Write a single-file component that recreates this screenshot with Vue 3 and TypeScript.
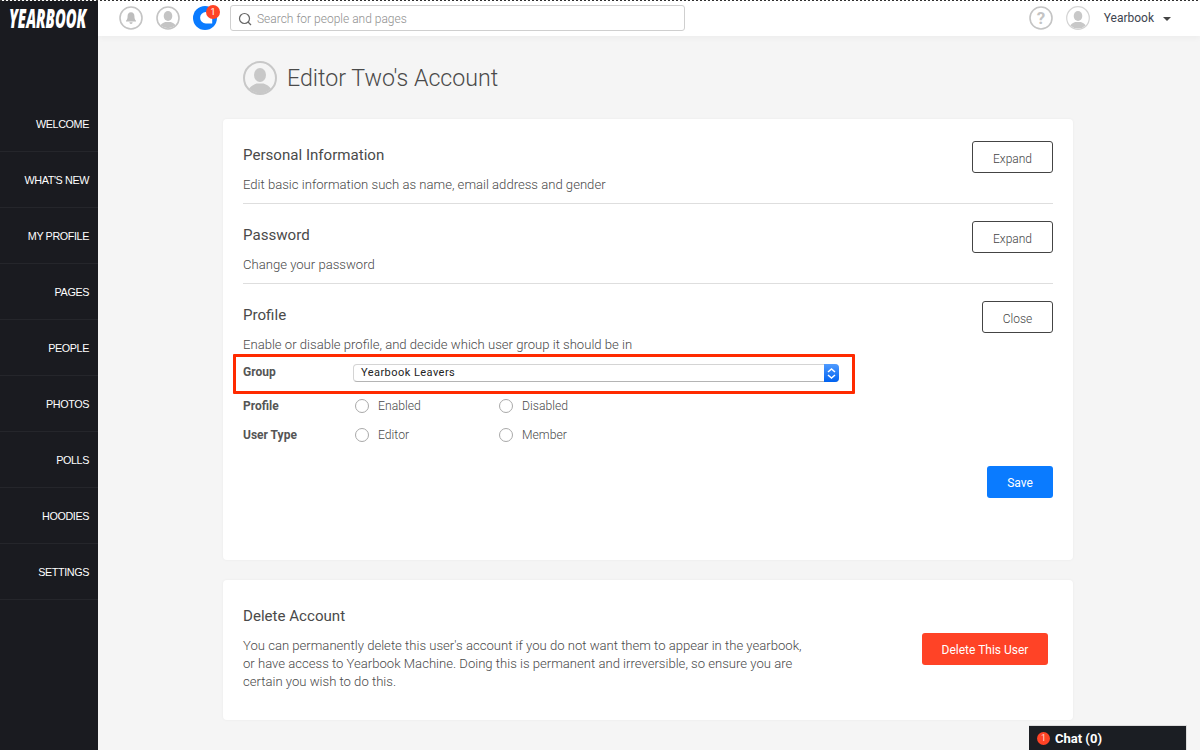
<script setup lang="ts">
const navItems: string[] = ['WELCOME', "WHAT'S NEW", 'MY PROFILE', 'PAGES', 'PEOPLE', 'PHOTOS', 'POLLS', 'HOODIES', 'SETTINGS']
</script>

<template>
  <div class="app">
    <div class="dots"></div>
    <aside class="sidebar">
      <div class="logo"><span>YEARBOOK</span></div>
      <nav class="nav">
        <a v-for="item in navItems" :key="item" class="nav-item">{{ item }}</a>
      </nav>
    </aside>
    <div class="main">
      <header class="topbar">
        <div class="top-left">
          <svg class="ic" width="24" height="24" viewBox="0 0 24 24">
            <circle cx="12" cy="12" r="11" fill="#fff" stroke="#c4c4c4" stroke-width="1.6" />
            <path d="M12 6.2c-2.4 0-3.4 1.8-3.4 3.8 0 2.6-.6 3.800-1.600 4.800v.7h10v-.7c-1-1-1.600-2.200-1.600-4.800 0-2-1-3.800-3.400-3.800z" fill="#bdbdbd" />
            <path d="M10.4 16.300h3.200a1.600 1.600 0 0 1-3.200 0z" fill="#bdbdbd" />
          </svg>
          <svg class="ic" width="24" height="24" viewBox="0 0 24 24">
            <defs><clipPath id="c1"><circle cx="12" cy="12" r="10.2" /></clipPath></defs>
            <circle cx="12" cy="12" r="11" fill="#fff" stroke="#c4c4c4" stroke-width="1.6" />
            <g clip-path="url(#c1)" fill="#c4c4c4">
              <ellipse cx="12" cy="10" rx="4.300" ry="5" />
              <path d="M3 24c0-5 4-7.500 6.500-8h5c2.500.5 6.500 3 6.500 8z" />
            </g>
          </svg>
          <div class="chat-ic">
            <svg width="24" height="24" viewBox="0 0 24 24">
              <circle cx="12" cy="12" r="12" fill="#0a7bff" />
              <path d="M12.800 6a5.700 5.700 0 1 0 0 11.400h6.400v-5.700a5.700 5.700 0 0 0-6.400-5.700z" fill="#fff" />
            </svg>
            <span class="bubble">1</span>
          </div>
          <div class="search">
            <svg width="14" height="14" viewBox="0 0 14 14" fill="none" stroke="#666" stroke-width="1.200">
              <circle cx="6.500" cy="6.500" r="5" />
              <path d="M10 10l3 3" />
            </svg>
            <span>Search for people and pages</span>
          </div>
        </div>
        <div class="top-right">
          <svg class="ic" width="24" height="24" viewBox="0 0 24 24">
            <circle cx="12" cy="12" r="11" fill="#fff" stroke="#c4c4c4" stroke-width="1.600" />
            <text x="12" y="18" text-anchor="middle" class="q">?</text>
          </svg>
          <svg class="ic user" width="24" height="24" viewBox="0 0 24 24">
            <defs><clipPath id="c2"><circle cx="12" cy="12" r="10.600" /></clipPath></defs>
            <circle cx="12" cy="12" r="11.300" fill="#fff" stroke="#d4d4d4" stroke-width="1.200" />
            <g clip-path="url(#c2)" fill="#c8c8c8">
              <ellipse cx="12" cy="10" rx="4.300" ry="5" />
              <path d="M3 24c0-5 4-7.500 6.500-8h5c2.500.5 6.500 3 6.500 8z" />
            </g>
          </svg>
          <span class="uname">Yearbook</span>
          <span class="caret"></span>
        </div>
      </header>

      <main class="content">
        <div class="page-title">
          <svg width="34" height="34" viewBox="0 0 34 34">
            <defs><clipPath id="c3"><circle cx="17" cy="17" r="15.200" /></clipPath></defs>
            <circle cx="17" cy="17" r="16" fill="#f5f5f5" stroke="#c8c8c8" stroke-width="2" />
            <g clip-path="url(#c3)" fill="#c8c8c8">
              <ellipse cx="17" cy="14" rx="6" ry="7" />
              <path d="M4 34c0-7 6-10.500 9.500-11.500h7c3.500 1 9.500 4.500 9.500 11.500z" />
            </g>
          </svg>
          <h1>Editor Two's Account</h1>
        </div>

        <section class="card account">
          <div class="section">
            <div class="section-text">
              <h2>Personal Information</h2>
              <p>Edit basic information such as name, email address and gender</p>
            </div>
            <button class="btn-outline expand">Expand</button>
          </div>
          <div class="section">
            <div class="section-text">
              <h2>Password</h2>
              <p>Change your password</p>
            </div>
            <button class="btn-outline expand">Expand</button>
          </div>
          <div class="section open">
            <div class="section-text">
              <h2>Profile</h2>
              <p>Enable or disable profile, and decide which user group it should be in</p>
            </div>
            <button class="btn-outline close">Close</button>
          </div>

          <div class="form">
            <div class="form-row group-row">
              <label>Group</label>
              <div class="select">
                <span>Yearbook Leavers</span>
                <span class="select-arrow">
                  <svg width="9" height="13" viewBox="0 0 9 13" fill="none" stroke="#fff" stroke-width="1.500">
                    <path d="M1 5l3.500-3L8 5" />
                    <path d="M1 8l3.500 3L8 8" />
                  </svg>
                </span>
              </div>
              <div class="highlight"></div>
            </div>
            <div class="form-row radios">
              <label>Profile</label>
              <span class="radio"><i></i>Enabled</span>
              <span class="radio"><i></i>Disabled</span>
            </div>
            <div class="form-row radios">
              <label>User Type</label>
              <span class="radio"><i></i>Editor</span>
              <span class="radio"><i></i>Member</span>
            </div>
          </div>
          <div class="save-row">
            <button class="btn-save">Save</button>
          </div>
        </section>

        <section class="card delete">
          <div class="delete-text">
            <h2>Delete Account</h2>
            <p>You can permanently delete this user's account if you do not want them to appear in the yearbook, or have access to Yearbook Machine. Doing this is permanent and irreversible, so ensure you are certain you wish to do this.</p>
          </div>
          <button class="btn-delete">Delete This User</button>
        </section>
      </main>
    </div>

    <div class="chat">
      <span class="chat-badge">1</span>
      <span>Chat (0)</span>
    </div>
  </div>
</template>

<style>
html, body { margin: 0; padding: 0; background: #f5f5f5; }
</style>

<style scoped>
.app {
  position: relative;
  display: flex;
  width: 1200px;
  height: 750px;
  overflow: hidden;
  background: #f5f5f5;
  font-family: Roboto, "Liberation Sans", sans-serif;
  color: #4a4a4a;
}
.dots {
  position: absolute;
  top: 0;
  left: 0;
  right: 0;
  height: 1px;
  z-index: 5;
  background: repeating-linear-gradient(90deg, #333 0 2px, #fff 2px 4px);
}
.sidebar {
  width: 98px;
  flex: none;
  background: #1a1b20;
  color: #fff;
}
.logo {
  height: 96px;
  box-sizing: border-box;
  padding: 3px 0 0 9px;
  font-family: "Open Sans", sans-serif;
  font-size: 26px;
  line-height: 30px;
  font-weight: 800;
  font-style: italic;
  color: #fff;
}
.logo span {
  display: inline-block;
  transform: scaleX(0.565);
  transform-origin: 0 50%;
  white-space: nowrap;
}
.nav { display: flex; flex-direction: column; }
.nav-item {
  height: 56px;
  box-sizing: border-box;
  padding: 1px 9px 0 0;
  display: flex;
  align-items: center;
  justify-content: flex-end;
  font-family: "Liberation Sans", sans-serif;
  font-size: 10.800px;
  letter-spacing: -0.4px;
  color: #fff;
  border-bottom: 1px solid #25262b;
}
.main { flex: 1; min-width: 0; display: flex; flex-direction: column; }
.topbar {
  height: 36px;
  flex: none;
  background: #fff;
  display: flex;
  align-items: center;
  justify-content: space-between;
  padding: 0 29px 0 21px;
  box-shadow: 0 2px 6px rgba(0, 0, 0, 0.04);
}
.top-left { display: flex; align-items: center; gap: 13px; }
.top-right { display: flex; align-items: center; }
.ic { display: block; }
.chat-ic { position: relative; width: 24px; height: 24px; }
.chat-ic svg { display: block; }
.bubble {
  position: absolute;
  top: -1px;
  right: -3px;
  width: 14px;
  height: 14px;
  border-radius: 50%;
  background: #ff4326;
  color: #fff;
  font-size: 9px;
  line-height: 14px;
  text-align: center;
}
.search {
  width: 455px;
  height: 26px;
  box-sizing: border-box;
  border: 1px solid #cfcfcf;
  border-radius: 3px;
  display: flex;
  align-items: center;
  gap: 5px;
  padding: 1px 0 0 7px;
  font-size: 12px;
  font-weight: 300;
  color: #8f8f8f;
  background: #fff;
}
.q { font: 700 17px Roboto, sans-serif; fill: #c4c4c4; }
.user { margin-left: 13px; }
.uname { margin-left: 14px; font-size: 12px; color: #3e4450; }
.caret {
  margin-left: 9px;
  margin-top: 2px;
  width: 0;
  height: 0;
  border-left: 4px solid transparent;
  border-right: 4px solid transparent;
  border-top: 4px solid #444;
}
.content {
  width: 850px;
  margin-left: 125px;
  display: flex;
  flex-direction: column;
}
.page-title {
  height: 83px;
  display: flex;
  align-items: center;
  gap: 10px;
  padding: 0 0 0 20px;
}
h1 {
  margin: 0;
  font-size: 23.200px;
  font-weight: 300;
  color: #4a4a4a;
  line-height: 34px;
}
.card {
  background: #fff;
  border-radius: 4px;
  box-shadow: 0 0 3px rgba(0, 0, 0, 0.05);
}
.account {
  height: 441px;
  padding: 5px 20px 0;
  box-sizing: border-box;
}
.section {
  height: 80px;
  box-sizing: border-box;
  display: flex;
  justify-content: space-between;
  align-items: flex-start;
  border-bottom: 1px solid #dedede;
}
.section.open { border-bottom: none; }
.section-text { padding-top: 21px; }
h2 {
  margin: 0;
  font-size: 15.100px;
  font-weight: 400;
  line-height: 20px;
  color: #4a4a4a;
}
.section-text p {
  margin: 10px 0 0;
  font-size: 13.100px;
  font-weight: 300;
  line-height: 20px;
  color: #4a4a4a;
}
.btn-outline {
  margin-top: 17px;
  height: 32px;
  box-sizing: border-box;
  background: #fff;
  border: 1px solid #444;
  border-radius: 3px;
  font-family: inherit;
  font-size: 12px;
  font-weight: 300;
  color: #444;
  padding: 3px 0 0;
}
.expand { width: 81px; }
.close { width: 71px; }
.form { margin-top: -10px; }
.form-row {
  position: relative;
  display: flex;
  align-items: center;
  font-size: 12px;
}
.form-row label {
  width: 110px;
  flex: none;
  font-weight: 700;
  color: #555;
}
.group-row { height: 24px; margin-top: 7px; }
.group-row label { margin-bottom: 2px; }
.select {
  width: 486px;
  height: 18px;
  box-sizing: border-box;
  position: relative;
  background: #fff;
  border: 1px solid #d4d4d4;
  border-bottom-color: #b4b4b4;
  border-radius: 4px;
  padding-left: 7px;
  font-size: 11px;
  line-height: 16px;
  letter-spacing: 0.45px;
  color: #222;
}
.select-arrow {
  position: absolute;
  top: -1px;
  right: -1px;
  width: 15px;
  height: 18px;
  border-radius: 0 4px 4px 0;
  background: linear-gradient(#4f9bff, #0062f0);
  display: flex;
  align-items: center;
  justify-content: center;
}
.highlight {
  position: absolute;
  left: -10px;
  top: -7px;
  width: 622px;
  height: 40px;
  box-sizing: border-box;
  border: 3px solid #ff2a00;
  border-radius: 1px;
  pointer-events: none;
}
.radios { height: 29px; }
.radios:nth-child(2) { margin-top: 6px; }
.radio {
  width: 144px;
  display: flex;
  align-items: center;
  flex: none;
  font-weight: 300;
  font-size: 12.200px;
  color: #4a4a4a;
}
.radio i {
  width: 12px;
  height: 12px;
  border: 1px solid #a9a9a9;
  border-radius: 50%;
  background: #fff;
  margin: 0 9px 0 2px;
  flex: none;
}
.save-row {
  display: flex;
  justify-content: flex-end;
  margin-top: 17px;
}
.btn-save {
  width: 66px;
  height: 32px;
  border: none;
  border-radius: 3px;
  background: #0a7bff;
  color: #fff;
  font-family: inherit;
  font-size: 12px;
  padding: 2px 0 0;
}
.delete {
  margin-top: 20px;
  height: 140px;
  box-sizing: border-box;
  padding: 26px 25px 0 20px;
  display: flex;
  justify-content: space-between;
  align-items: flex-start;
}
.delete-text { width: 566px; }
.delete-text p {
  margin: 11px 0 0;
  font-size: 13.100px;
  font-weight: 300;
  line-height: 18px;
  color: #4a4a4a;
}
.btn-delete {
  margin-top: 27px;
  width: 126px;
  height: 32px;
  border: none;
  border-radius: 3px;
  background: #ff4326;
  color: #fff;
  font-family: inherit;
  font-size: 12px;
  font-weight: 400;
  padding: 2px 0 0;
}
.chat {
  position: absolute;
  left: 1029px;
  top: 725px;
  width: 158px;
  height: 25px;
  box-sizing: border-box;
  background: #1b1e23;
  border: 1px solid #ddd;
  border-bottom: none;
  border-left: none;
  display: flex;
  align-items: center;
  gap: 5px;
  padding-left: 8px;
  color: #fff;
  font-size: 13px;
  font-weight: 700;
}
.chat-badge {
  width: 13px;
  height: 13px;
  border-radius: 50%;
  background: #ff4326;
  color: #ffd9d0;
  font-size: 9px;
  font-weight: 400;
  line-height: 13px;
  text-align: center;
}
</style>
